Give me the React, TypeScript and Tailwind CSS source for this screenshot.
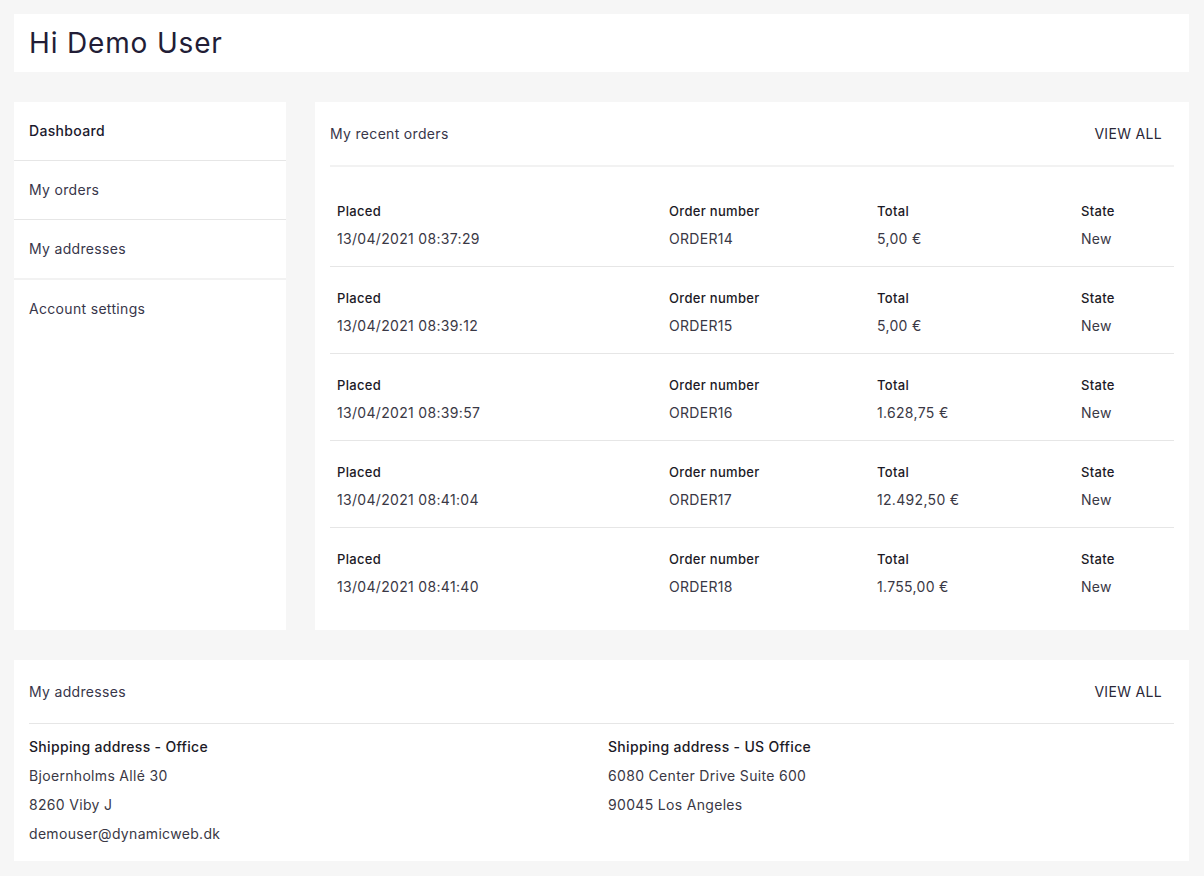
import React from 'react'

const orders = [
  { placed: '13/04/2021 08:37:29', number: 'ORDER14', total: '5,00 €', state: 'New' },
  { placed: '13/04/2021 08:39:12', number: 'ORDER15', total: '5,00 €', state: 'New' },
  { placed: '13/04/2021 08:39:57', number: 'ORDER16', total: '1.628,75 €', state: 'New' },
  { placed: '13/04/2021 08:41:04', number: 'ORDER17', total: '12.492,50 €', state: 'New' },
  { placed: '13/04/2021 08:41:40', number: 'ORDER18', total: '1.755,00 €', state: 'New' },
]

const navItems = ['Dashboard', 'My orders', 'My addresses', 'Account settings']

function Cell({ label, value }: { label: string; value: string }) {
  return (
    <div>
      <div className="text-[13px] leading-[18px] font-medium text-[#1c1a26]">{label}</div>
      <div className="mt-[9px] text-[14px] leading-[20px] text-[#3a3845]">{value}</div>
    </div>
  )
}

export default function App() {
  return (
    <div
      className="min-h-[876px] bg-[#f6f6f6] pl-[14px] pr-[15px] pt-[14px] pb-[15px] tracking-[0.02em] text-[#2b2838]"
      style={{ fontFamily: 'Inter, "Noto Sans", sans-serif' }}
    >
      {/* Greeting */}
      <div className="flex h-[58px] items-center bg-white px-[15px]">
        <h1 className="text-[28px] leading-[34px] font-normal tracking-[0.03em] text-[#221d36]">Hi Demo User</h1>
      </div>

      <div className="mt-[30px] flex gap-[29px]">
        {/* Sidebar nav */}
        <nav className="h-[528px] w-[272px] shrink-0 bg-white">
          {navItems.map((item, i) => (
            <div
              key={item}
              className={`px-[15px] py-[19px] text-[14px] leading-[20px] ${
                i === 0 ? 'font-medium text-[#1c1a2e]' : 'text-[#38364a]'
              } ${i < 2 ? 'border-b border-[#e6e6e6]' : i === 2 ? 'border-b-2 border-[#f2f2f2]' : ''}`}
            >
              {item}
            </div>
          ))}
        </nav>

        {/* Recent orders */}
        <section className="h-[528px] flex-1 bg-white px-[15px]">
          <div className="flex items-center justify-between border-b-2 border-[#f2f2f2] pt-[22px] pb-[21px]">
            <h2 className="text-[14px] leading-[20px] text-[#38364a]">My recent orders</h2>
            <a className="pr-[12px] text-[14px] leading-[20px] uppercase text-[#2b2838]">View all</a>
          </div>
          <div className="mt-[13px]">
            {orders.map((o, i) => (
              <div
                key={o.number}
                className={`grid grid-cols-[332px_208px_204px_1fr] pl-[7px] pt-[22px] pb-[17px] ${
                  i < orders.length - 1 ? 'border-b border-[#e6e6e6]' : ''
                }`}
              >
                <Cell label="Placed" value={o.placed} />
                <Cell label="Order number" value={o.number} />
                <Cell label="Total" value={o.total} />
                <Cell label="State" value={o.state} />
              </div>
            ))}
          </div>
        </section>
      </div>

      {/* Addresses */}
      <section className="mt-[30px] h-[201px] bg-white px-[15px]">
        <div className="flex items-center justify-between border-b border-[#e6e6e6] pt-[22px] pb-[21px]">
          <h2 className="text-[14px] leading-[20px] text-[#38364a]">My addresses</h2>
          <a className="pr-[12px] text-[14px] leading-[20px] uppercase text-[#2b2838]">View all</a>
        </div>
        <div className="grid grid-cols-[579px_1fr] pt-[8px] text-[14px] leading-[29px] text-[#3a3845]">
          <div>
            <div className="font-medium text-[#1c1a26]">Shipping address - Office</div>
            <div>Bjoernholms Allé 30</div>
            <div>8260 Viby J</div>
            <div>demouser@dynamicweb.dk</div>
          </div>
          <div>
            <div className="font-medium text-[#1c1a26]">Shipping address - US Office</div>
            <div>6080 Center Drive Suite 600</div>
            <div>90045 Los Angeles</div>
          </div>
        </div>
      </section>
    </div>
  )
}
